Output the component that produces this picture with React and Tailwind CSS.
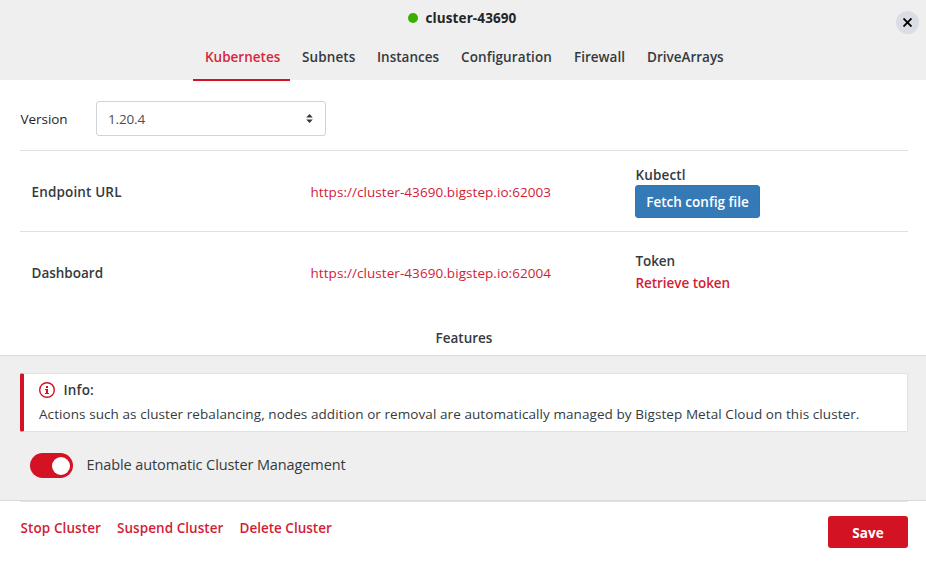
const tabs = [
  { label: "Kubernetes", cls: "w-[97px] text-[#d7263d] border-b-2 border-[#d31224]" },
  { label: "Subnets", cls: "w-[75px] tracking-[0.1px]" },
  { label: "Instances", cls: "w-[84px]" },
  { label: "Configuration", cls: "w-[113px] tracking-[0.1px]" },
  { label: "Firewall", cls: "w-[73px]" },
  { label: "DriveArrays", cls: "w-[100px]" },
];

function Header() {
  return (
    <header className="relative h-20 shrink-0 bg-[#efefef]">
      <div className="flex h-9 items-center justify-center pr-[2px]">
        <span className="mr-[8px] size-[10px] rounded-full bg-[#38b000]" />
        <h1 className="font-bold tracking-[0.1px] text-[#212529]">cluster-43690</h1>
      </div>
      <nav className="flex h-[45px] pl-[193px]">
        {tabs.map((t) => (
          <a key={t.label} className={"pl-[12px] pt-[10px] font-[570] leading-[22px] " + t.cls}>
            {t.label}
          </a>
        ))}
      </nav>
      <button className="absolute top-[11px] left-[896px] flex size-[23px] items-center justify-center rounded-full bg-[#dadde4]">
        <svg width="9" height="9" viewBox="0 0 9 9" stroke="#000" strokeWidth="1.9">
          <path d="M0.5 0.5L8.5 8.5M8.5 0.5L0.5 8.5" />
        </svg>
      </button>
    </header>
  );
}

function VersionRow() {
  return (
    <div className="flex h-[70px] items-start pt-[21px]">
      <label className="w-[76px] pt-[7px] pl-[0.5px] leading-[22px] tracking-[-0.05px] text-[#212529]">Version</label>
      <div className="flex h-[35px] w-[230px] items-center justify-between rounded-[3px] border border-[#ced4da] pr-[12px] pl-[11px]">
        <span className="pt-px tracking-[-0.15px] text-[#495057]">1.20.4</span>
        <svg width="7" height="9" viewBox="0 0 7 9" className="-mt-px" fill="#343a40">
          <path d="M0.2 3.6L3.5 0L6.8 3.6ZM0.2 5.4L3.5 9L6.8 5.4Z" />
        </svg>
      </div>
    </div>
  );
}

export default function App() {
  return (
    <div className="flex h-[566px] w-[926px] flex-col overflow-hidden bg-white font-['Open_Sans','Noto_Sans',sans-serif] text-[13.5px] text-[#343a40]">
      <Header />
      <main className="h-[275px] shrink-0 pr-[18px] pl-[20px]">
        <VersionRow />
        <section className="flex h-[81px] items-center border-t border-[#dee2e6]">
          <div className="w-[290px] pt-[2px] pl-[11.5px] font-[570] tracking-[0.15px]">Endpoint URL</div>
          <a className="w-[325px] pt-[2px] pl-[0.5px] tracking-[0.06px] text-[#d31c36]">https://cluster-43690.bigstep.io:62003</a>
          <div>
            <div className="pl-[0.5px] font-[570] leading-[20px] tracking-[0.15px]">Kubectl</div>
            <button className="flex h-[33px] w-[125px] items-center justify-center rounded-[3px] border border-[#0f7bf0] bg-[#337ab7] pt-[2px] font-[570] text-white">
              Fetch config file
            </button>
          </div>
        </section>
        <section className="flex h-[81px] items-center border-t border-[#dee2e6]">
          <div className="w-[290px] pt-[2px] pl-[11.5px] font-[570]">Dashboard</div>
          <a className="w-[325px] pt-[2px] pl-[0.5px] tracking-[0.06px] text-[#d31c36]">https://cluster-43690.bigstep.io:62004</a>
          <div className="pl-[0.5px] font-[570] leading-[22px]">
            <div className="tracking-[-0.1px]">Token</div>
            <a className="block tracking-[-0.05px] text-[#d31c36]">Retrieve token</a>
          </div>
        </section>
        <h2 className="pt-[15px] text-center font-[570] leading-[22px]">Features</h2>
      </main>
      <section className="h-[146px] shrink-0 border-y border-[#dadada] bg-[#efefef] pt-[17px] pr-[18px] pl-[20px]">
        <div className="h-[59px] rounded-[2px] border border-l-4 border-[#e2e2e2] border-l-[#d31224] bg-white pl-[15px]">
          <div className="flex h-[32px] items-center">
            <svg width="16" height="16" viewBox="0 0 16 16" fill="none">
              <circle cx="8" cy="8" r="7.3" stroke="#d31224" strokeWidth="1.4" />
              <path d="M7 4h2v2H7zM6 7h3v4h1v1H6v-1h1V8H6z" fill="#d31224" />
            </svg>
            <span className="ml-[8.5px] pt-px font-[570] tracking-[0.2px]">Info:</span>
          </div>
          <p className="whitespace-nowrap pt-px leading-[15px] tracking-[0.075px]">
            Actions such as cluster rebalancing, nodes addition or removal are automatically managed by Bigstep Metal Cloud on this cluster.
          </p>
        </div>
        <div className="mt-[21px] flex h-[25px] items-center pl-[10px]">
          <span className="flex h-[25px] w-[43px] items-center justify-end rounded-full bg-[#d31224] pr-[3px]">
            <span className="size-[18px] rounded-full bg-white" />
          </span>
          <span className="ml-[13.5px] pb-[2px] text-[14.5px] tracking-[-0.1px]">Enable automatic Cluster Management</span>
        </div>
      </section>
      <footer className="mr-[18px] ml-[20px] flex h-[65px] shrink-0 items-start border-t border-[#e2e2e2] pl-[0.5px] font-[570] text-[#d31c36]">
        <a className="w-[96.5px] pt-[15px] leading-[22px] tracking-[0.1px]">Stop Cluster</a>
        <a className="w-[122.5px] pt-[15px] leading-[22px] tracking-[0.05px]">Suspend Cluster</a>
        <a className="pt-[15px] leading-[22px]">Delete Cluster</a>
        <button className="mt-[14px] ml-auto flex h-[32px] w-[80px] items-center justify-center rounded-[3px] bg-[#d31224] pt-[2px] font-bold tracking-[0.1px] text-white">
          Save
        </button>
      </footer>
    </div>
  );
}
